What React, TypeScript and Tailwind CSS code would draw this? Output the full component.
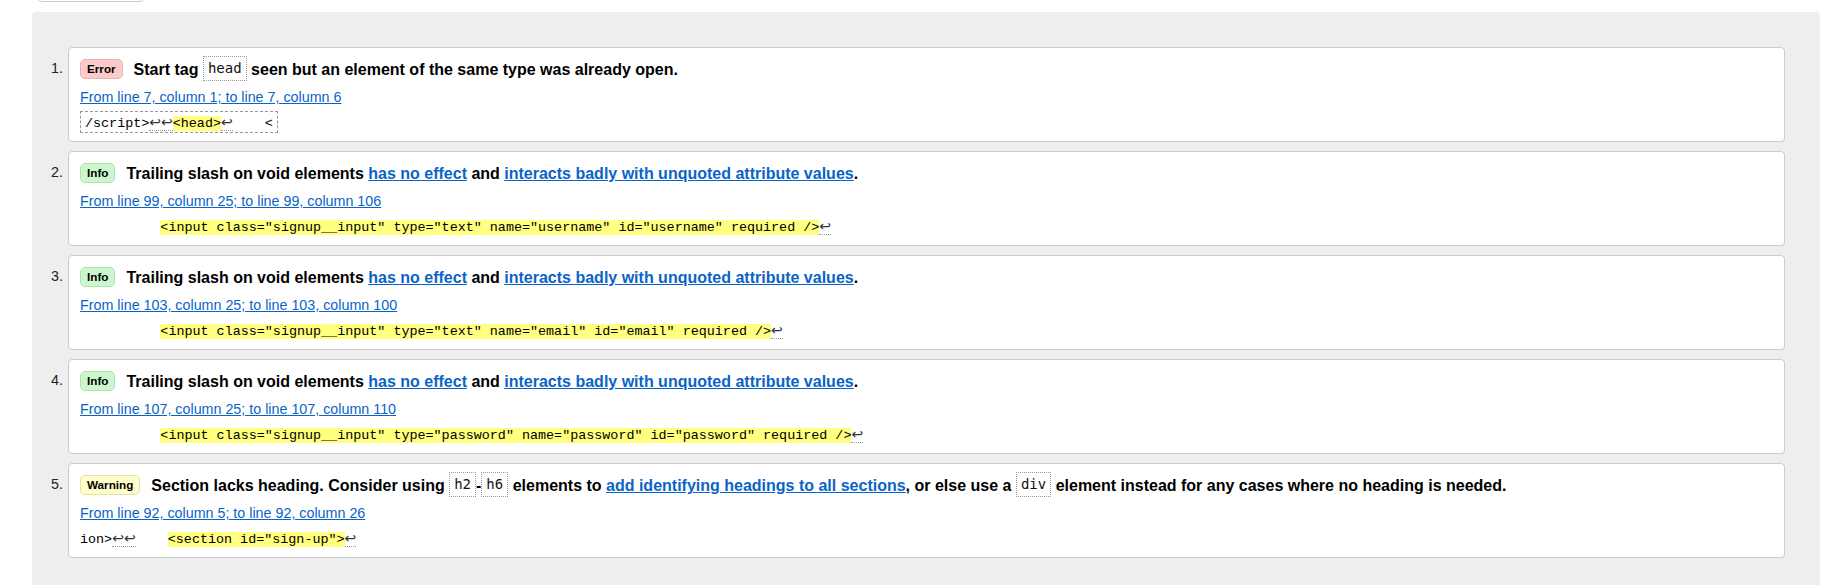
import React from "react";

const mono = "font-['DejaVu_Sans_Mono','Liberation_Mono',monospace]";

type Kind = "error" | "info" | "warning";

const badgeStyles: Record<Kind, string> = {
  error: "bg-[#fccaca] border-[#e9b3b3]",
  info: "bg-[#ccf7cc] border-[#b3e0b3]",
  warning: "bg-[#ffffcc] border-[#e3e3a8]",
};

const badgeText: Record<Kind, string> = {
  error: "Error",
  info: "Info",
  warning: "Warning",
};

function Badge({ kind }: { kind: Kind }) {
  return (
    <span
      className={`mr-[11px] mt-[2px] inline-block h-[20px] rounded-[5px] border px-[6px] align-top text-[11.7px] font-bold leading-[18px] text-black ${badgeStyles[kind]}`}
    >
      {badgeText[kind]}
    </span>
  );
}

function Code({ children }: { children: React.ReactNode }) {
  return (
    <code
      className={`${mono} -mt-[1px] inline-block h-[25px] border border-dotted border-[#999] px-[4px] align-top text-[14px] font-normal leading-[23px] text-[#111]`}
    >
      {children}
    </code>
  );
}

function A({ children }: { children: React.ReactNode }) {
  return (
    <a href="#" className="text-[#0a64c8] underline">
      {children}
    </a>
  );
}

// return-arrow marker with dotted underline
function Ret({ n = 1 }: { n?: number }) {
  return (
    <span className="border-b border-dotted border-[#999] font-['DejaVu_Sans',sans-serif] text-[14px] text-[#333]">
      {"↩".repeat(n)}
    </span>
  );
}

function Hl({ children }: { children: React.ReactNode }) {
  return <span className="bg-[#ffff80]">{children}</span>;
}

interface Item {
  kind: Kind;
  title: React.ReactNode;
  from: string;
  extract: React.ReactNode;
  boxed?: boolean;
}

const items: Item[] = [
  {
    kind: "error",
    title: (
      <>
        Start tag <Code>head</Code> seen but an element of the same type was
        already open.
      </>
    ),
    from: "From line 7, column 1; to line 7, column 6",
    extract: (
      <>
        /script&gt;
        <Ret n={2} />
        <Hl>&lt;head&gt;</Hl>
        <Ret />
        {"    <"}
      </>
    ),
    boxed: true,
  },
  {
    kind: "info",
    title: (
      <>
        Trailing slash on void elements <A>has no effect</A> and{" "}
        <A>interacts badly with unquoted attribute values</A>.
      </>
    ),
    from: "From line 99, column 25; to line 99, column 106",
    extract: (
      <>
        {"          "}
        <Hl>
          {'<input class="signup__input" type="text" name="username" id="username" required />'}
        </Hl>
        <Ret />
      </>
    ),
  },
  {
    kind: "info",
    title: (
      <>
        Trailing slash on void elements <A>has no effect</A> and{" "}
        <A>interacts badly with unquoted attribute values</A>.
      </>
    ),
    from: "From line 103, column 25; to line 103, column 100",
    extract: (
      <>
        {"          "}
        <Hl>
          {'<input class="signup__input" type="text" name="email" id="email" required />'}
        </Hl>
        <Ret />
      </>
    ),
  },
  {
    kind: "info",
    title: (
      <>
        Trailing slash on void elements <A>has no effect</A> and{" "}
        <A>interacts badly with unquoted attribute values</A>.
      </>
    ),
    from: "From line 107, column 25; to line 107, column 110",
    extract: (
      <>
        {"          "}
        <Hl>
          {'<input class="signup__input" type="password" name="password" id="password" required />'}
        </Hl>
        <Ret />
      </>
    ),
  },
  {
    kind: "warning",
    title: (
      <>
        Section lacks heading. Consider using <Code>h2</Code>-<Code>h6</Code>{" "}
        elements to <A>add identifying headings to all sections</A>, or else
        use a <Code>div</Code> element instead for any cases where no heading
        is needed.
      </>
    ),
    from: "From line 92, column 5; to line 92, column 26",
    extract: (
      <>
        ion&gt;
        <Ret n={2} />
        {"    "}
        <Hl>&lt;section id="sign-up"&gt;</Hl>
        <Ret />
      </>
    ),
  },
];

export default function App() {
  return (
    <div className="min-h-[585px] bg-white font-['Liberation_Sans',Arial,sans-serif] text-black">
      {/* bottom edge of a button scrolled off the top */}
      <div className="ml-[38px] -mt-[20px] h-[22px] w-[106px] rounded-[4px] border border-[#c8c8c8] bg-white" />

      <div className="ml-[32px] mr-[10px] mt-[10px] rounded-t-[4px] bg-[#eeeeee] pb-[40px] pr-[35px] pt-[35px]">
        <ol className="flex flex-col gap-[9px]">
          {items.map((item, i) => (
            <li key={i} className="flex">
              <div className="w-[36px] shrink-0 pr-[5px] pt-[11px] text-right text-[14.3px] leading-[20px] text-[#222]">
                {i + 1}.
              </div>
              <div className="flex-1 rounded-[4px] border border-[#cccccc] bg-white px-[11px] pb-[8px] pt-[9px]">
                <p className="whitespace-nowrap text-[16px] font-bold leading-[26px]">
                  <Badge kind={item.kind} />
                  {item.title}
                </p>
                <p className="mt-[4px] text-[14.3px] leading-[20px]">
                  <A>{item.from}</A>
                </p>
                <div className={`${mono} mt-[4px] h-[22px] whitespace-pre text-[13.4px] leading-[22px] text-black`}>
                  {item.boxed ? (
                    <code className="inline-block h-[22px] border border-dashed border-[#999] px-[4px] align-top leading-[20px]">
                      {item.extract}
                    </code>
                  ) : (
                    <code>{item.extract}</code>
                  )}
                </div>
              </div>
            </li>
          ))}
        </ol>
      </div>
    </div>
  );
}
